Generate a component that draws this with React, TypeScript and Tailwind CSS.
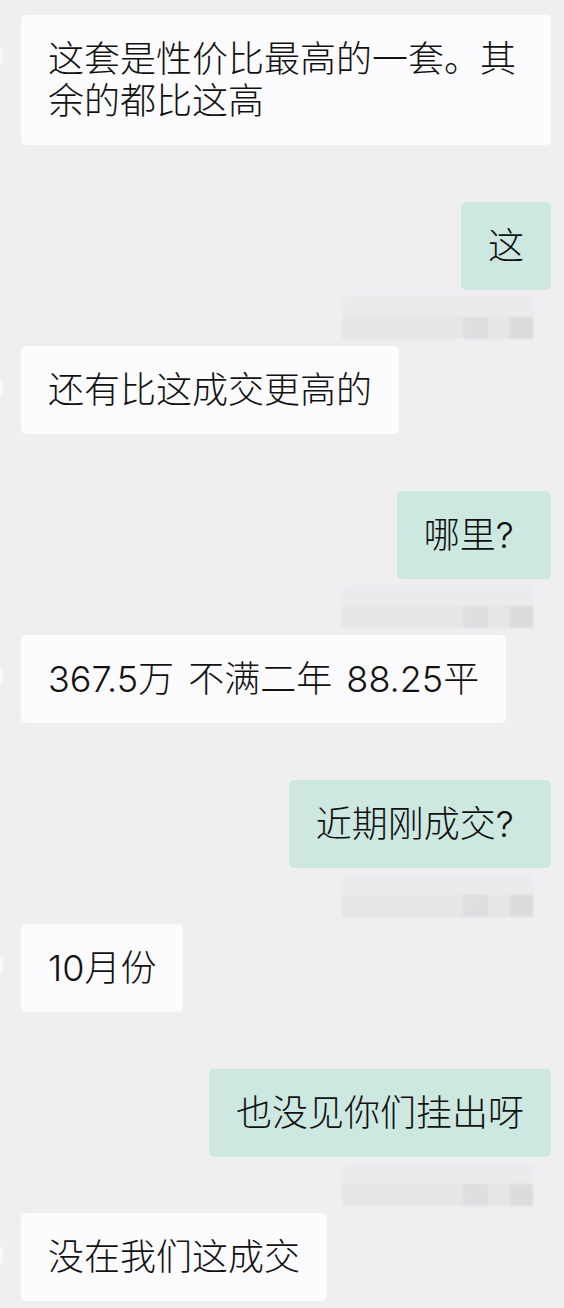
const font = {
  fontFamily: 'Inter, "Noto Sans CJK SC", sans-serif',
};

type Msg = { side: "left" | "right"; text: string };

const messages: Msg[] = [
  { side: "left", text: "这套是性价比最高的一套。其余的都比这高" },
  { side: "right", text: "这" },
  { side: "left", text: "还有比这成交更高的" },
  { side: "right", text: "哪里? " },
  { side: "left", text: "367.5万 不满二年 88.25平" },
  { side: "right", text: "近期刚成交? " },
  { side: "left", text: "10月份" },
  { side: "right", text: "也没见你们挂出呀" },
  { side: "left", text: "没在我们这成交" },
];

function LeftBubble({ text }: { text: string }) {
  return (
    <div className="flex items-start pr-[13px] mb-[57px]">
      {/* edge of the cut-off avatar */}
      <div className="w-[3px] h-[17px] mt-[33px] bg-[#f8f7f9] rounded-r-sm shrink-0" />
      <div className="ml-[18px] max-w-[530px] bg-[#fcfbfd] rounded-[5px] px-[27px] py-[23px] text-[36px] leading-[42px] font-light text-[#111111] [word-spacing:4px] break-all">
        {text}
      </div>
    </div>
  );
}

function RightBubble({ text }: { text: string }) {
  return (
    <div className="flex flex-col items-end pr-[13px]">
      <div className="bg-[#cde8e1] rounded-[5px] px-[27px] py-[23px] text-[36px] leading-[42px] font-light text-[#111111] whitespace-pre">
        {text}
      </div>
      {/* blurred read receipt */}
      <div className="h-[56px] w-full flex justify-end pt-[7px] pr-[18px]">
        <div className="w-[191px] h-[42px] flex flex-col blur-[1px]">
          <div className="h-[20px] bg-[#ebeaed] rounded-tl-[6px]" />
          <div className="h-[22px] flex">
            <div className="w-[121px] bg-[#e6e5e8]" />
            <div className="w-[25px] bg-[#dedde0]" />
            <div className="w-[22px] bg-[#e6e5e8]" />
            <div className="w-[23px] bg-[#dcdbde]" />
          </div>
        </div>
      </div>
    </div>
  );
}

export default function App() {
  return (
    <main className="min-h-screen w-[564px] bg-[#efeef1] pt-[15px] pb-2 flex flex-col" style={font}>
      {messages.map((m, i) =>
        m.side === "left" ? (
          <LeftBubble key={i} text={m.text} />
        ) : (
          <RightBubble key={i} text={m.text} />
        )
      )}
    </main>
  );
}
